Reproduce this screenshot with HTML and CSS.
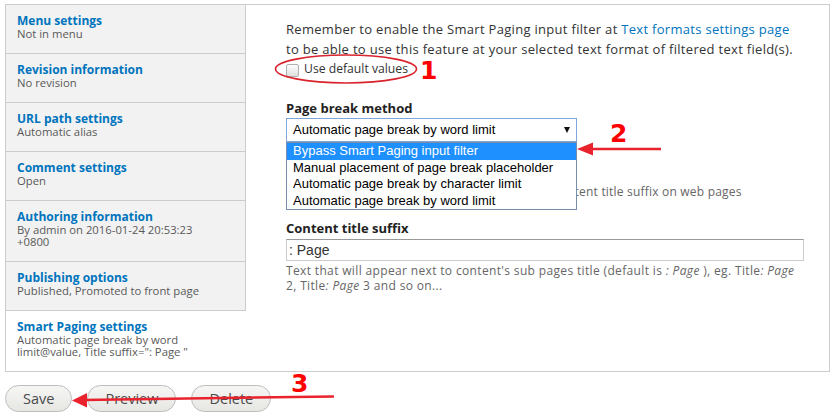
FILE: index.html
```html
<!DOCTYPE html>
<html lang="en">

<head>
    <meta charset="UTF-8">
    <meta name="viewport" content="width=device-width, initial-scale=1.0">
    <title>Smart Paging settings</title>
    <link rel="stylesheet" href="styles.css">
</head>

<body>
    <div class="page">
        <div class="vtabs">
            <ul class="vtabs-menu">
                <li class="vtab"><a class="vtab-title" href="#">Menu settings</a><span class="vtab-summary">Not in menu</span></li>
                <li class="vtab"><a class="vtab-title" href="#">Revision information</a><span class="vtab-summary">No revision</span></li>
                <li class="vtab"><a class="vtab-title" href="#">URL path settings</a><span class="vtab-summary">Automatic alias</span></li>
                <li class="vtab"><a class="vtab-title" href="#">Comment settings</a><span class="vtab-summary">Open</span></li>
                <li class="vtab"><a class="vtab-title" href="#">Authoring information</a><span class="vtab-summary">By admin on 2016-01-24 20:53:23<br>+0800</span></li>
                <li class="vtab"><a class="vtab-title" href="#">Publishing options</a><span class="vtab-summary">Published, Promoted to front page</span></li>
                <li class="vtab is-active"><a class="vtab-title" href="#">Smart Paging settings</a><span class="vtab-summary">Automatic page break by word<br>limit@value, Title suffix=": Page "</span></li>
            </ul>
            <div class="vtabs-pane">
                <p class="note">Remember to enable the Smart Paging input filter at <a href="#">Text formats settings page</a><br>to be able to use this feature at your selected text format of filtered text field(s).</p>
                <label class="option"><input type="checkbox">Use default values</label>

                <div class="field field-method">
                    <label class="field-label">Page break method</label>
                    <div class="select-wrap">
                        <div class="select">Automatic page break by word limit<span class="caret"></span></div>
                        <ul class="select-list">
                            <li class="is-hover">Bypass Smart Paging input filter</li>
                            <li>Manual placement of page break placeholder</li>
                            <li>Automatic page break by character limit</li>
                            <li>Automatic page break by word limit</li>
                        </ul>
                    </div>
                </div>

                <!-- mostly covered by the open dropdown -->
                <div class="field field-display">
                    <div class="description">Check this to show the page number after the content title suffix on web pages</div>
                </div>

                <div class="field field-suffix">
                    <label class="field-label">Content title suffix</label>
                    <input class="text-input" type="text" value=": Page">
                    <div class="description">Text that will appear next to content's sub pages title (default is <em>: Page</em> ), eg. Title<em>: Page</em><br>2, Title<em>: Page</em> 3 and so on...</div>
                </div>
            </div>
        </div>

        <div class="actions">
            <button class="button">Save</button>
            <button class="button">Preview</button>
            <button class="button">Delete</button>
        </div>

        <!-- red annotation marks over the screenshot -->
        <svg class="marks" width="835" height="417" viewBox="0 0 835 417">
            <ellipse cx="346" cy="69" rx="70.5" ry="14" fill="none" stroke="#d9232d" stroke-width="1.6" />
            <text class="mark-num" x="420" y="79">1</text>

            <text class="mark-num" x="610" y="142">2</text>
            <line x1="661" y1="149" x2="590" y2="149" stroke="#e8232d" stroke-width="2.5" />
            <polygon points="577,149 593,142.5 593,155.5" fill="#e8232d" />

            <text class="mark-num" x="291" y="392">3</text>
            <line x1="334" y1="396.5" x2="84" y2="400" stroke="#e8232d" stroke-width="2.5" />
            <polygon points="72,400.5 87,393 87,407.5" fill="#e8232d" />
        </svg>
    </div>
</body>

</html>
```

FILE: styles.css
```css
body {
    margin: 0;
    font-family: "Open Sans", "DejaVu Sans", sans-serif;
    color: #333;
    background-color: #fff;
}

.page {
    position: relative;
    width: 835px;
    height: 417px;
    padding: 4px 0 0 5px;
    box-sizing: border-box;
    overflow: hidden;
}

/* vertical tabs box */
.vtabs {
    display: flex;
    width: 825px;
    height: 368px;
    border: 1px solid #ccc;
    box-sizing: border-box;
}

.vtabs-menu {
    display: flex;
    flex-direction: column;
    flex-shrink: 0;
    width: 240px;
    margin: 0;
    padding: 0;
    list-style: none;
    background-color: #f2f2f2;
}

.vtab {
    padding: 8px 10px 13px 11px;
    border-bottom: 1px solid #ccc;
    border-right: 1px solid #ccc;
}

.vtab.is-active {
    flex: 1;
    background-color: #fff;
    border-bottom: 0;
    border-right: 0;
}

.vtab-title {
    display: block;
    font-size: 12px;
    font-weight: 700;
    line-height: 15px;
    color: #0074bd;
    text-decoration: none;
}

.vtab-summary {
    display: block;
    font-size: 11.3px;
    line-height: 12px;
    color: #595959;
}

/* pane on the right */
.vtabs-pane {
    flex: 1;
    padding: 14px 20px 0 40px;
    font-size: 13px;
    line-height: 20px;
}

.note {
    margin: 0;
    letter-spacing: 0.3px;
}

.note a {
    color: #0074bd;
    text-decoration: none;
}

.option {
    display: flex;
    align-items: center;
    height: 20px;
    font-size: 12.2px;
    color: #333;
}

.option input {
    appearance: none;
    width: 13px;
    height: 13px;
    margin: 2px 5px 0 0;
    border: 1px solid #b0b0b0;
    border-radius: 2px;
    background: linear-gradient(#fdfdfd, #e0e0e0);
}

.field-label {
    display: block;
    font-weight: 700;
    color: #222;
}

.field-method {
    margin-top: 19px;
}

.field-display {
    margin-top: 42px;
}

.field-suffix {
    margin-top: 19px;
}

.select-wrap {
    position: relative;
    width: 291px;
}

.select {
    display: flex;
    justify-content: space-between;
    align-items: center;
    height: 24px;
    padding: 0 6px;
    box-sizing: border-box;
    border: 1px solid #7fa6d8;
    font: 13px/22px "Liberation Sans", Arial, sans-serif;
    color: #000;
    background-color: #fff;
}

.caret {
    border-left: 3.5px solid transparent;
    border-right: 3.5px solid transparent;
    border-top: 6px solid #111;
}

.select-list {
    position: absolute;
    top: 100%;
    left: 0;
    right: 0;
    z-index: 2;
    margin: 0;
    padding: 0;
    list-style: none;
    border: 1px solid #7b8ea9;
    background-color: #fff;
}

.select-list li {
    height: 16.5px;
    padding-left: 6px;
    font: 13px/16.5px "Liberation Sans", Arial, sans-serif;
    color: #000;
    white-space: nowrap;
}

.select-list li.is-hover {
    background-color: #1e90ff;
    color: #fff;
}

.description {
    font-size: 12px;
    line-height: 15px;
    letter-spacing: 0.35px;
    color: #666;
    white-space: nowrap;
}

.field-display .description {
    letter-spacing: 0.2px;
}

.text-input {
    display: block;
    width: 518px;
    height: 22px;
    margin: 1px 0 2px;
    padding: 0 2px;
    box-sizing: border-box;
    border: 1px solid #ccc;
    border-top-color: #999;
    font: 14px/20px "Liberation Sans", Arial, sans-serif;
    color: #333;
}

/* form buttons */
.actions {
    display: flex;
    gap: 15px;
    margin-top: 13px;
}

.button {
    height: 27px;
    padding: 0 17px;
    border: 1px solid #bdbdbd;
    border-radius: 20px;
    background: linear-gradient(#f6f6f4, #e6e6e3);
    font-family: "Open Sans", "DejaVu Sans", sans-serif;
    font-size: 14.5px;
    line-height: 25px;
    color: #4a4a4a;
}

.marks {
    position: absolute;
    top: 0;
    left: 0;
    z-index: 5;
    pointer-events: none;
}

.mark-num {
    font-family: "DejaVu Sans", sans-serif;
    font-size: 25px;
    font-weight: 700;
    fill: #ff0000;
}
```
